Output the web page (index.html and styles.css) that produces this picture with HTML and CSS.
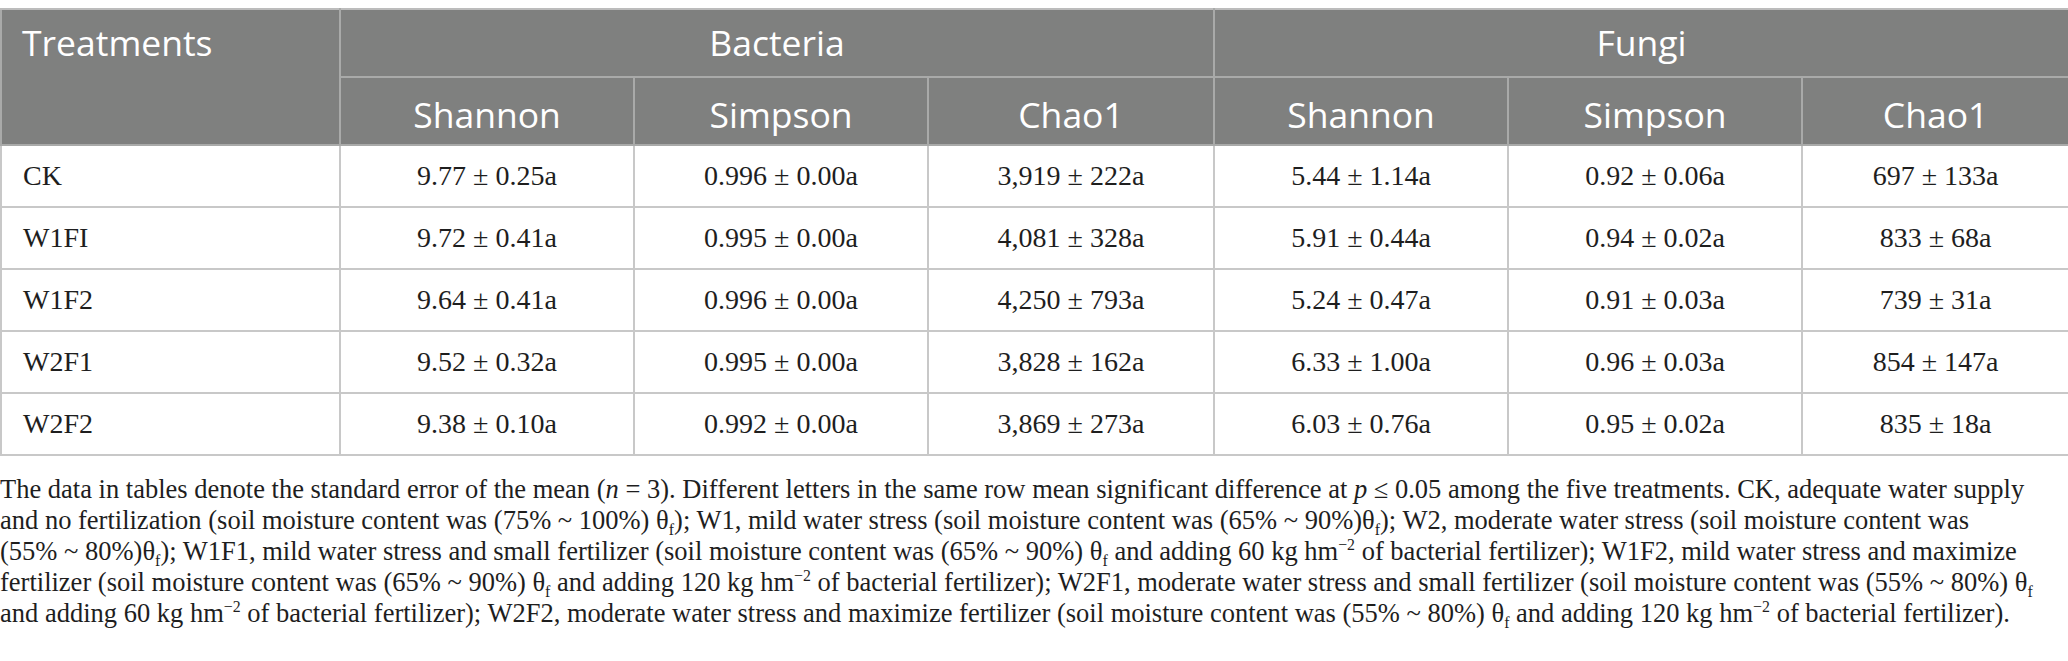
FILE: index.html
```html
<!DOCTYPE html>
<html>
<head>
  <title>Alpha diversity</title>
  <link rel="stylesheet" href="styles.css">
</head>
<body>
  <table class="grid">
    <colgroup>
      <col class="c-lead">
      <col class="c-a">
      <col class="c-a">
      <col class="c-b">
      <col class="c-a">
      <col class="c-a">
      <col class="c-c">
    </colgroup>
    <thead>
      <tr class="top">
        <th rowspan="2" class="lead">Treatments</th>
        <th colspan="3">Bacteria</th>
        <th colspan="3">Fungi</th>
      </tr>
      <tr class="sub">
        <th>Shannon</th>
        <th>Simpson</th>
        <th>Chao1</th>
        <th>Shannon</th>
        <th>Simpson</th>
        <th>Chao1</th>
      </tr>
    </thead>
    <tbody>
      <tr>
        <td class="lead">CK</td>
        <td>9.77 ± 0.25a</td>
        <td>0.996 ± 0.00a</td>
        <td>3,919 ± 222a</td>
        <td>5.44 ± 1.14a</td>
        <td>0.92 ± 0.06a</td>
        <td>697 ± 133a</td>
      </tr>
      <tr>
        <td class="lead">W1FI</td>
        <td>9.72 ± 0.41a</td>
        <td>0.995 ± 0.00a</td>
        <td>4,081 ± 328a</td>
        <td>5.91 ± 0.44a</td>
        <td>0.94 ± 0.02a</td>
        <td>833 ± 68a</td>
      </tr>
      <tr>
        <td class="lead">W1F2</td>
        <td>9.64 ± 0.41a</td>
        <td>0.996 ± 0.00a</td>
        <td>4,250 ± 793a</td>
        <td>5.24 ± 0.47a</td>
        <td>0.91 ± 0.03a</td>
        <td>739 ± 31a</td>
      </tr>
      <tr>
        <td class="lead">W2F1</td>
        <td>9.52 ± 0.32a</td>
        <td>0.995 ± 0.00a</td>
        <td>3,828 ± 162a</td>
        <td>6.33 ± 1.00a</td>
        <td>0.96 ± 0.03a</td>
        <td>854 ± 147a</td>
      </tr>
      <tr>
        <td class="lead">W2F2</td>
        <td>9.38 ± 0.10a</td>
        <td>0.992 ± 0.00a</td>
        <td>3,869 ± 273a</td>
        <td>6.03 ± 0.76a</td>
        <td>0.95 ± 0.02a</td>
        <td>835 ± 18a</td>
      </tr>
    </tbody>
  </table>

  <p class="note">
    The data in tables denote the standard error of the mean (<i>n</i> = 3). Different letters in the same row mean significant difference at <i>p</i> ≤ 0.05 among the five treatments. CK, adequate water supply<br>
    and no fertilization (soil moisture content was (75% ~ 100%) θ<sub>f</sub>); W1, mild water stress (soil moisture content was (65% ~ 90%)θ<sub>f</sub>); W2, moderate water stress (soil moisture content was<br>
    (55% ~ 80%)θ<sub>f</sub>); W1F1, mild water stress and small fertilizer (soil moisture content was (65% ~ 90%) θ<sub>f</sub> and adding 60 kg hm<sup>−2</sup> of bacterial fertilizer); W1F2, mild water stress and maximize<br>
    fertilizer (soil moisture content was (65% ~ 90%) θ<sub>f</sub> and adding 120 kg hm<sup>−2</sup> of bacterial fertilizer); W2F1, moderate water stress and small fertilizer (soil moisture content was (55% ~ 80%) θ<sub>f</sub><br>
    and adding 60 kg hm<sup>−2</sup> of bacterial fertilizer); W2F2, moderate water stress and maximize fertilizer (soil moisture content was (55% ~ 80%) θ<sub>f</sub> and adding 120 kg hm<sup>−2</sup> of bacterial fertilizer).
  </p>
</body>
</html>
```

FILE: styles.css
```css
body {
  margin: 8px 0 0;
  background: #ffffff;
  color: #1e1e1e;
}

.grid {
  width: 2068px;
  border-collapse: collapse;
  table-layout: fixed;
}
.c-lead { width: 339px; }
.c-a { width: 294px; }
.c-b { width: 286px; }
.c-c { width: 267px; }

.grid th {
  background-color: #7f807f;
  color: #ffffff;
  font-family: "Open Sans", "Noto Sans", sans-serif;
  font-weight: 400;
  font-size: 35.5px;
  line-height: 40px;
  border: 2px solid #a9aaa9;
  text-align: center;
  padding: 0 20px;
}
.grid thead tr:first-child th {
  border-top-color: #bcbcbc;
}
.grid .top th {
  height: 68px;
  vertical-align: top;
  padding-top: 12px;
  box-sizing: border-box;
}
.grid .sub th {
  height: 68px;
  vertical-align: middle;
  padding-top: 6px;
  box-sizing: border-box;
}
.grid th.lead {
  text-align: left;
  padding-left: 20px;
}

.grid td {
  font-family: "Liberation Serif", "Times New Roman", serif;
  font-size: 28px;
  height: 62px;
  box-sizing: border-box;
  border: 2px solid #c8c8c8;
  text-align: center;
  vertical-align: middle;
  padding: 0 20px;
}
.grid td.lead {
  text-align: left;
  padding-left: 21px;
}

.note {
  margin: 18px 0 0;
  font-family: "Liberation Serif", "Times New Roman", serif;
  font-size: 26.5px;
  line-height: 31px;
  color: #1e1e1e;
  white-space: nowrap;
}
.note sub,
.note sup {
  font-size: 60%;
  line-height: 0;
}
```
